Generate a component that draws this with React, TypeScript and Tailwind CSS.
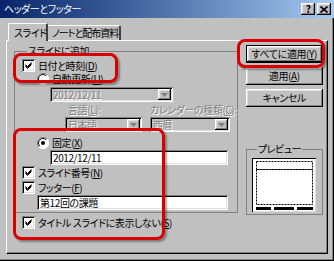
import React from 'react';

const raised = 'shadow-[inset_-1px_-1px_#000,inset_1px_1px_#fff,inset_-2px_-2px_#808080,inset_2px_2px_#dfdfdf]';
const sunken = 'shadow-[inset_1px_1px_#808080,inset_-1px_-1px_#fff,inset_2px_2px_#000,inset_-2px_-2px_#dfdfdf]';
const dimText = 'text-[#808080] [text-shadow:1px_1px_#fff]';

const Check = () => (
	<div className={`w-[13px] h-[13px] bg-white shrink-0 flex items-center justify-center ${sunken}`}>
		<svg width="9" height="9" viewBox="0 0 9 9">
			<path d="M1.5 3.5 L3.5 5.5 L7.5 1.5 M1.5 4.5 L3.5 6.5 L7.5 2.5 M1.5 5.5 L3.5 7.5 L7.5 3.5" stroke="#000" strokeWidth="1" fill="none" />
		</svg>
	</div>
);

const Radio = ({ on }: { on: boolean }) => (
	<svg width="12" height="12" viewBox="0 0 12 12" className="shrink-0">
		<circle cx="6" cy="6" r="5.5" fill="#fff" />
		<path d="M10 2 A5.5 5.5 0 0 0 2 10" stroke="#808080" strokeWidth="1" fill="none" />
		<path d="M2 10 A5.5 5.5 0 0 0 10 2" stroke="#fff" strokeWidth="1" fill="none" />
		<path d="M9.2 2.8 A4.5 4.5 0 0 0 2.8 9.2" stroke="#000" strokeWidth="1" fill="none" />
		{on && <circle cx="6" cy="6" r="2" fill="#000" />}
	</svg>
);

const Combo = ({ w, text }: { w: string; text: string }) => (
	<div className={`${w} h-[15px] bg-[#c0c0c0] relative flex items-center pl-[3px] ${sunken}`}>
		<span className={dimText}>{text}</span>
		<div className={`absolute right-[2px] top-[2px] w-[13px] h-[11px] bg-[#c0c0c0] flex items-center justify-center ${raised}`}>
			<svg width="7" height="4" viewBox="0 0 7 4">
				<path d="M0 0 H7 L3.5 4 Z" fill="#808080" />
			</svg>
		</div>
	</div>
);

const Field = ({ w, text }: { w: string; text: string }) => (
	<div className={`${w} h-[15px] bg-white flex items-center pl-[3px] text-black ${sunken}`}>{text}</div>
);

const Button = ({ children, primary }: { children: React.ReactNode; primary?: boolean }) => (
	<div className={`w-[77px] h-[18px] flex items-center justify-center bg-[#c0c0c0] ${primary ? 'border border-black' : ''}`}>
		<div className={`w-full h-full flex items-center justify-center ${raised}`}>{children}</div>
	</div>
);

const Redmark = ({ cls }: { cls: string }) => (
	<div className={`absolute border-[3px] border-[#d80000] rounded-[8px] shadow-[2px_2px_2px_rgba(0,0,0,0.35)] pointer-events-none ${cls}`} />
);

const App = () => {
	return (
		<div className="relative w-[334px] h-[261px] bg-[#c0c0c0] text-[10px] leading-[12px] tracking-[-0.4px] whitespace-nowrap text-black font-['Noto_Sans_CJK_JP','Noto_Sans',sans-serif] [font-feature-settings:'palt'] shadow-[inset_-1px_-1px_#000,inset_-2px_-2px_#808080] overflow-hidden">
			{/* title bar */}
			<div className="h-[18px] flex items-center justify-between pl-[4px] pr-[3px] bg-gradient-to-r from-[#0a246a] to-[#a6caf0] text-white">
				<span>ヘッダーとフッター</span>
				<div className="flex gap-[2px]">
					<div className={`w-[14px] h-[12px] bg-[#c0c0c0] flex items-center justify-center text-black font-bold text-[10px] leading-none ${raised}`}>?</div>
					<div className={`w-[14px] h-[12px] bg-[#c0c0c0] flex items-center justify-center ${raised}`}>
						<svg width="8" height="7" viewBox="0 0 8 7">
							<path d="M0.5 0.5 L7.5 6.5 M7.5 0.5 L0.5 6.5" stroke="#000" strokeWidth="1.6" />
						</svg>
					</div>
				</div>
			</div>

			{/* tabs */}
			<div className="flex items-end pl-[8px] pt-[4px] h-[22px]">
				<div className="relative z-10 w-[40px] h-[18px] -mb-[1px] bg-[#c0c0c0] border-l border-t border-white border-r-2 border-r-[#404040] rounded-t-[2px] pl-[5px] pt-[3px]">
					スライド
				</div>
				<div className="w-[73px] h-[15px] bg-[#c0c0c0] border-t border-white border-r-2 border-r-[#404040] rounded-tr-[2px] pl-[4px] pt-[1px] tracking-[-1px]">
					ノートと配布資料
				</div>
			</div>

			{/* panel */}
			<div className="mx-[6px] h-[214px] border-l border-t border-white border-r border-b border-r-[#000] border-b-[#000] shadow-[inset_-1px_-1px_#808080] flex gap-[8px] pl-[7px] pt-[4px]">
				<div className="flex flex-col">
					<fieldset className="w-[221px] border border-[#808080] pl-[7px] pb-[2px]">
						<legend className="ml-[5px] px-[1px]">スライドに追加</legend>
						<div className="flex items-center gap-[3px] h-[13px] mt-[2px]">
							<Check />
							<span>
								日付と時刻(<u>D</u>)
							</span>
						</div>
						<div className="flex items-center gap-[3px] h-[13px] pl-[15px]">
							<Radio on={false} />
							<span>
								自動更新(<u>U</u>)
							</span>
						</div>
						<div className="pl-[28px] mt-[2px]">
							<Combo w="w-[123px]" text="2012/12/11" />
						</div>
						<div className={`flex mt-[2px] h-[12px] pl-[43px] ${dimText}`}>
							<span className="w-[85px] pl-[3px]">
								言語(<u>L</u>):
							</span>
							<span>
								カレンダーの種類(<u>C</u>):
							</span>
						</div>
						<div className="flex mt-[1px] pl-[43px] gap-[8px]">
							<Combo w="w-[77px]" text="日本語" />
							<Combo w="w-[80px]" text="西暦" />
						</div>
						<div className="flex items-center gap-[3px] h-[13px] mt-[4px] pl-[15px]">
							<Radio on={true} />
							<span>
								固定(<u>X</u>)
							</span>
						</div>
						<div className="pl-[28px] mt-[1px]">
							<Field w="w-[178px]" text="2012/12/11" />
						</div>
						<div className="flex items-center gap-[3px] h-[13px] mt-[1px]">
							<Check />
							<span>
								スライド番号(<u>N</u>)
							</span>
						</div>
						<div className="flex items-center gap-[3px] h-[13px] mt-[2px]">
							<Check />
							<span>
								フッター(<u>F</u>)
							</span>
						</div>
						<div className="pl-[15px] mt-[1px]">
							<Field w="w-[191px]" text="第12回の課題" />
						</div>
					</fieldset>
					<div className="flex items-center gap-[3px] h-[13px] mt-[3px] pl-[8px]">
						<Check />
						<span>
							タイトル スライドに表示しない(<u>S</u>)
						</span>
					</div>
				</div>

				<div className="flex flex-col w-[77px]">
					<div className="flex flex-col gap-[4px]">
						<Button primary>
							すべてに適用(<u>Y</u>)
						</Button>
						<Button>
							適用(<u>A</u>)
						</Button>
						<Button>キャンセル</Button>
					</div>
					<fieldset className="mt-[36px] w-[77px] border border-[#808080] pl-[5px] pb-[2px]">
						<legend className="ml-[5px] px-[1px]">プレビュー</legend>
						<div className="w-[64px] h-[54px] bg-white mt-[3px] shadow-[inset_1px_1px_#000,inset_-1px_-1px_#dfdfdf]">
							<svg width="64" height="54" viewBox="0 0 64 54">
								<rect x="4.5" y="3.5" width="56" height="8" fill="none" stroke="#000" strokeWidth="1" strokeDasharray="2 1" />
								<rect x="4.5" y="11.5" width="56" height="35" fill="none" stroke="#000" strokeWidth="1" strokeDasharray="2 1" />
								<rect x="4" y="49" width="15" height="3" fill="#000" />
								<rect x="22" y="49" width="20" height="3" fill="#000" />
								<rect x="45" y="49" width="16" height="3" fill="#000" />
							</svg>
						</div>
					</fieldset>
				</div>
			</div>

			<Redmark cls="left-[13px] top-[53px] w-[105px] h-[30px]" />
			<Redmark cls="left-[237px] top-[39px] w-[88px] h-[29px]" />
			<Redmark cls="left-[13px] top-[128px] w-[152px] h-[112px]" />
		</div>
	);
};

export default App;
